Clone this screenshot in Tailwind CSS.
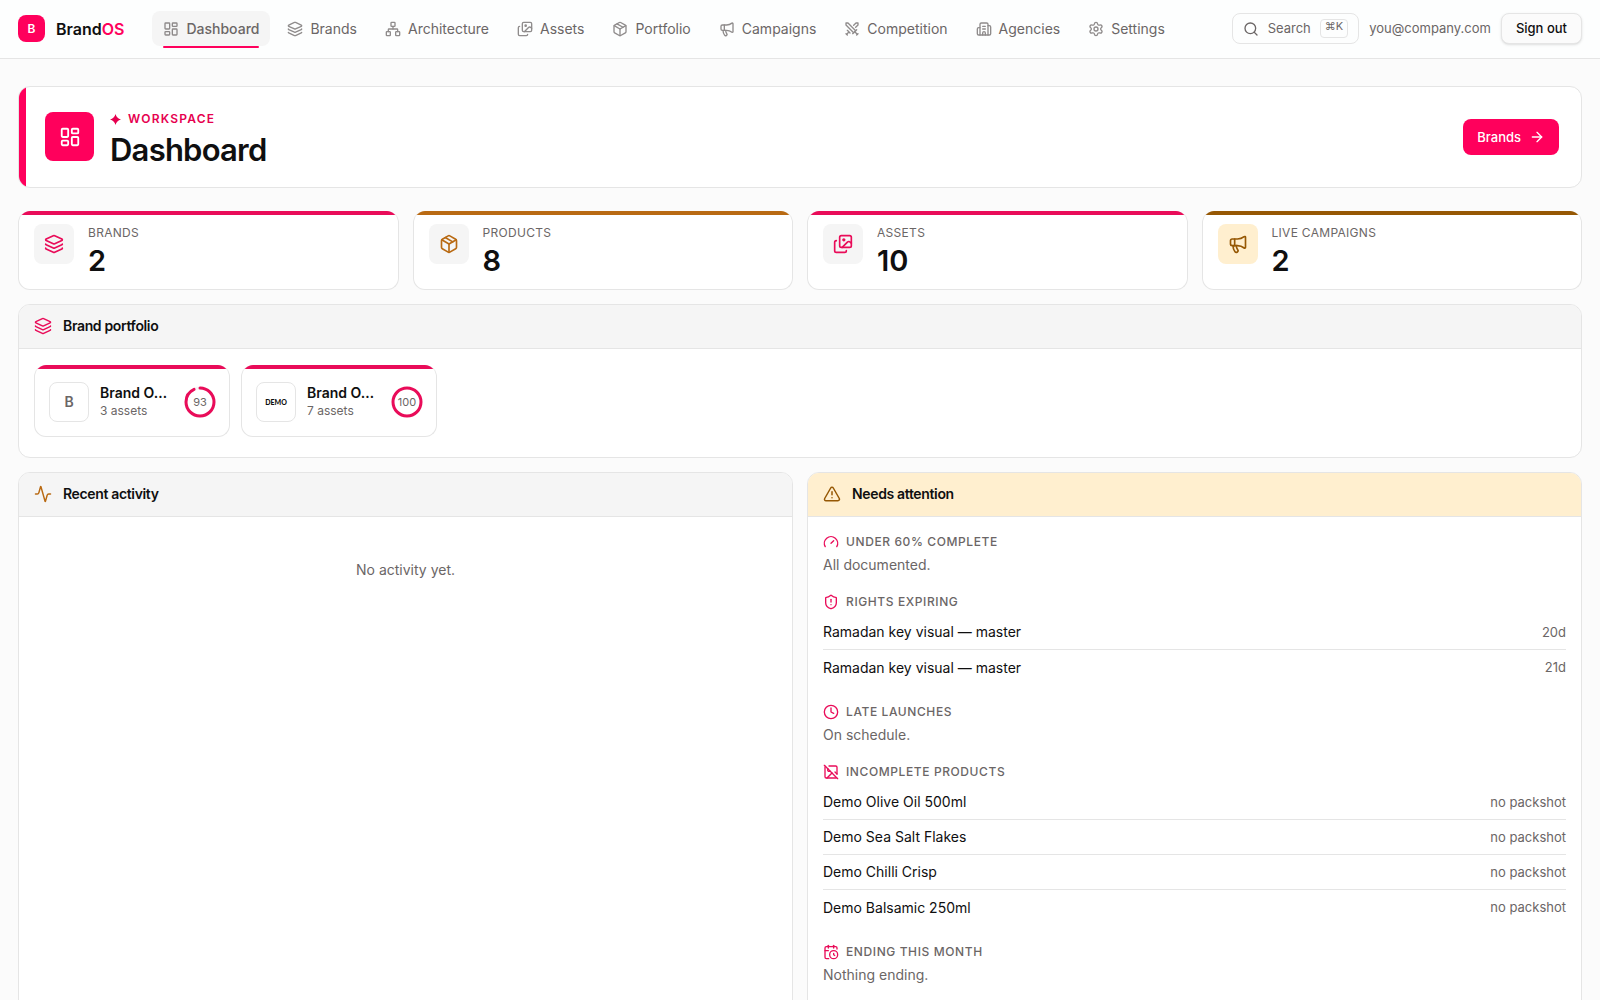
<!DOCTYPE html>
<html lang="en" class="h-full bg-[#fbfbfb]">
  <head>
    <meta charset="UTF-8">
    <meta name="viewport" content="width=device-width, initial-scale=1.0">
    <title>Dashboard · BrandOS</title>
    <script src="https://cdn.jsdelivr.net/npm/@tailwindcss/browser@4"></script>
  </head>
  <body class="min-h-full font-[Inter,sans-serif] text-sm text-[#0f0f10] [stroke-linecap:round] [stroke-linejoin:round]">
    <!-- Icon sprite -->
    <svg class="hidden" aria-hidden="true">
      <symbol id="i-dashboard" viewBox="0 0 24 24"><rect width="7" height="9" x="3" y="3" rx="1" /><rect width="7" height="5" x="14" y="3" rx="1" /><rect width="7" height="9" x="14" y="12" rx="1" /><rect width="7" height="5" x="3" y="16" rx="1" /></symbol>
      <symbol id="i-layers" viewBox="0 0 24 24"><path d="M12.83 2.18a2 2 0 0 0-1.66 0L2.6 6.08a1 1 0 0 0 0 1.83l8.58 3.91a2 2 0 0 0 1.66 0l8.58-3.9a1 1 0 0 0 0-1.83z" /><path d="M2 12a1 1 0 0 0 .58.91l8.6 3.91a2 2 0 0 0 1.65 0l8.58-3.9A1 1 0 0 0 22 12" /><path d="M2 17a1 1 0 0 0 .58.91l8.6 3.91a2 2 0 0 0 1.65 0l8.58-3.9A1 1 0 0 0 22 17" /></symbol>
      <symbol id="i-network" viewBox="0 0 24 24"><rect x="16" y="16" width="6" height="6" rx="1" /><rect x="2" y="16" width="6" height="6" rx="1" /><rect x="9" y="2" width="6" height="6" rx="1" /><path d="M5 16v-3a1 1 0 0 1 1-1h12a1 1 0 0 1 1 1v3" /><path d="M12 12V8" /></symbol>
      <symbol id="i-images" viewBox="0 0 24 24"><path d="m22 11-1.296-1.296a2.4 2.4 0 0 0-3.408 0L11 16" /><path d="M4 8a2 2 0 0 0-2 2v10a2 2 0 0 0 2 2h10a2 2 0 0 0 2-2" /><circle cx="13" cy="7" r="1" fill="currentColor" /><rect x="8" y="2" width="14" height="14" rx="2" /></symbol>
      <symbol id="i-package" viewBox="0 0 24 24"><path d="M11 21.73a2 2 0 0 0 2 0l7-4A2 2 0 0 0 21 16V8a2 2 0 0 0-1-1.73l-7-4a2 2 0 0 0-2 0l-7 4A2 2 0 0 0 3 8v8a2 2 0 0 0 1 1.73z" /><path d="M12 22V12" /><path d="M3.29 7 12 12l8.71-5" /><path d="m7.5 4.27 9 5.15" /></symbol>
      <symbol id="i-megaphone" viewBox="0 0 24 24"><path d="M11 6a13 13 0 0 0 8.4-2.8A1 1 0 0 1 21 4v12a1 1 0 0 1-1.6.8A13 13 0 0 0 11 14H5a2 2 0 0 1-2-2V8a2 2 0 0 1 2-2z" /><path d="M6 14a12 12 0 0 0 2.4 7.2 2 2 0 0 0 3.2-2.4A8 8 0 0 1 10 14" /><path d="M8 6v8" /></symbol>
      <symbol id="i-swords" viewBox="0 0 24 24"><path d="M14.5 17.5 3 6V3h3l11.5 11.5" /><path d="m13 19 6-6" /><path d="m16 16 4 4" /><path d="m19 21 2-2" /><path d="M14.5 6.5 18 3h3v3l-3.5 3.5" /><path d="m5 14 4 4" /><path d="m7 17-3 3" /><path d="m3 19 2 2" /></symbol>
      <symbol id="i-building" viewBox="0 0 24 24"><path d="M10 12h4" /><path d="M10 8h4" /><path d="M14 21v-3a2 2 0 0 0-4 0v3" /><path d="M6 10H4a2 2 0 0 0-2 2v7a2 2 0 0 0 2 2h16a2 2 0 0 0 2-2V9a2 2 0 0 0-2-2h-2" /><path d="M6 21V5a2 2 0 0 1 2-2h8a2 2 0 0 1 2 2v16" /></symbol>
      <symbol id="i-settings" viewBox="0 0 24 24"><path d="M9.671 4.136a2.34 2.34 0 0 1 4.659 0 2.34 2.34 0 0 0 3.319 1.915 2.34 2.34 0 0 1 2.33 4.033 2.34 2.34 0 0 0 0 3.831 2.34 2.34 0 0 1-2.33 4.033 2.34 2.34 0 0 0-3.319 1.915 2.34 2.34 0 0 1-4.659 0 2.34 2.34 0 0 0-3.32-1.915 2.34 2.34 0 0 1-2.33-4.033 2.34 2.34 0 0 0 0-3.831A2.34 2.34 0 0 1 6.35 6.051a2.34 2.34 0 0 0 3.319-1.915" /><circle cx="12" cy="12" r="3" /></symbol>
      <symbol id="i-search" viewBox="0 0 24 24"><path d="m21 21-4.34-4.34" /><circle cx="11" cy="11" r="8" /></symbol>
      <symbol id="i-arrow" viewBox="0 0 24 24"><path d="M5 12h14" /><path d="m12 5 7 7-7 7" /></symbol>
      <symbol id="i-activity" viewBox="0 0 24 24"><path d="M22 12h-2.48a2 2 0 0 0-1.93 1.46l-2.35 8.36a.25.25 0 0 1-.48 0L9.24 2.18a.25.25 0 0 0-.48 0l-2.35 8.36A2 2 0 0 1 4.49 12H2" /></symbol>
      <symbol id="i-alert" viewBox="0 0 24 24"><path d="m21.73 18-8-14a2 2 0 0 0-3.48 0l-8 14A2 2 0 0 0 4 21h16a2 2 0 0 0 1.73-3" /><path d="M12 9v4" /><path d="M12 17h.01" /></symbol>
      <symbol id="i-gauge" viewBox="0 0 24 24"><path d="m12 14 4-4" /><path d="M3.34 19a10 10 0 1 1 17.32 0" /></symbol>
      <symbol id="i-shield" viewBox="0 0 24 24"><path d="M20 13c0 5-3.5 7.5-7.66 8.95a1 1 0 0 1-.67-.01C7.5 20.5 4 18 4 13V6a1 1 0 0 1 1-1c2 0 4.5-1.2 6.24-2.72a1.17 1.17 0 0 1 1.52 0C14.51 3.81 17 5 19 5a1 1 0 0 1 1 1z" /><path d="M12 8v4" /><path d="M12 16h.01" /></symbol>
      <symbol id="i-clock" viewBox="0 0 24 24"><circle cx="12" cy="12" r="10" /><path d="M12 6v6l4 2" /></symbol>
      <symbol id="i-image-off" viewBox="0 0 24 24"><path d="m2 2 20 20" /><path d="M10.41 10.41a2 2 0 1 1-2.83-2.83" /><path d="M13.5 13.5 6 21" /><path d="m18 12 3 3" /><path d="M3.59 3.59A1.99 1.99 0 0 0 3 5v14a2 2 0 0 0 2 2h14c.55 0 1.052-.22 1.41-.59" /><path d="M21 15V5a2 2 0 0 0-2-2H9" /></symbol>
      <symbol id="i-calendar" viewBox="0 0 24 24"><path d="M16 14v2.2l1.6 1" /><path d="M16 2v4" /><path d="M21 7.5V6a2 2 0 0 0-2-2H5a2 2 0 0 0-2 2v14a2 2 0 0 0 2 2h3.5" /><path d="M3 10h5" /><path d="M8 2v4" /><circle cx="16" cy="16" r="6" /></symbol>
    </svg>

    <!-- Top bar -->
    <header class="flex h-[59px] items-center border-b border-[#e5e5e5] bg-[#fdfefe] px-[18px] pb-px">
      <a href="#" class="flex items-center gap-[11px]">
        <span class="flex size-[27px] items-center justify-center rounded-lg bg-[#ff005c] text-xs font-semibold text-white">B</span>
        <span class="text-base font-semibold">Brand<span class="text-[#ff005c]">OS</span></span>
      </a>
      <nav class="ml-7 flex items-center gap-1.5 text-[#6b6666]">
        <a href="#" aria-current="page" class="relative flex h-[35px] items-center gap-[7px] rounded-lg bg-[#f5f5f5] px-[11px] font-medium">
          <svg class="size-4 fill-none stroke-current stroke-2 opacity-75" aria-hidden="true"><use href="#i-dashboard" /></svg>
          Dashboard
          <span class="absolute inset-x-[11px] -bottom-0.5 h-0.5 rounded-full bg-[#ff005c]"></span>
        </a>
        <a href="#" class="flex h-[35px] items-center gap-[7px] rounded-lg px-[11px]">
          <svg class="size-4 fill-none stroke-current stroke-2 opacity-75" aria-hidden="true"><use href="#i-layers" /></svg>
          Brands
        </a>
        <a href="#" class="flex h-[35px] items-center gap-[7px] rounded-lg px-[11px]">
          <svg class="size-4 fill-none stroke-current stroke-2 opacity-75" aria-hidden="true"><use href="#i-network" /></svg>
          Architecture
        </a>
        <a href="#" class="flex h-[35px] items-center gap-[7px] rounded-lg px-[11px]">
          <svg class="size-4 fill-none stroke-current stroke-2 opacity-75" aria-hidden="true"><use href="#i-images" /></svg>
          Assets
        </a>
        <a href="#" class="flex h-[35px] items-center gap-[7px] rounded-lg px-[11px]">
          <svg class="size-4 fill-none stroke-current stroke-2 opacity-75" aria-hidden="true"><use href="#i-package" /></svg>
          Portfolio
        </a>
        <a href="#" class="flex h-[35px] items-center gap-[7px] rounded-lg px-[11px]">
          <svg class="size-4 fill-none stroke-current stroke-2 opacity-75" aria-hidden="true"><use href="#i-megaphone" /></svg>
          Campaigns
        </a>
        <a href="#" class="flex h-[35px] items-center gap-[7px] rounded-lg px-[11px]">
          <svg class="size-4 fill-none stroke-current stroke-2 opacity-75" aria-hidden="true"><use href="#i-swords" /></svg>
          Competition
        </a>
        <a href="#" class="flex h-[35px] items-center gap-[7px] rounded-lg px-[11px]">
          <svg class="size-4 fill-none stroke-current stroke-2 opacity-75" aria-hidden="true"><use href="#i-building" /></svg>
          Agencies
        </a>
        <a href="#" class="flex h-[35px] items-center gap-[7px] rounded-lg px-[11px]">
          <svg class="size-4 fill-none stroke-current stroke-2 opacity-75" aria-hidden="true"><use href="#i-settings" /></svg>
          Settings
        </a>
      </nav>
      <div class="ml-auto flex items-center gap-2.5 text-[13px] text-[#6b6666]">
        <button type="button" class="flex h-[31px] items-center gap-[9px] rounded-lg border border-[#e5e5e5] px-2.5">
          <svg class="size-4 fill-none stroke-current stroke-2" aria-hidden="true"><use href="#i-search" /></svg>
          Search
          <kbd class="flex h-[19px] items-center rounded border border-[#e5e5e5] px-1 pb-1 font-[Inter,sans-serif] text-[11px]">⌘K</kbd>
        </button>
        <span>you@company.com</span>
        <button type="button" class="h-[31px] rounded-lg border border-[#e5e5e5] bg-[#fbfbfb] px-3.5 font-medium text-[#0f0f10] shadow-sm">Sign out</button>
      </div>
    </header>

    <main class="flex flex-col gap-3.5 px-[18px] pt-[27px] pb-7">
      <!-- Heading -->
      <section class="mb-[9px] flex items-center overflow-hidden rounded-xl border border-[#e5e5e5] bg-white pr-[22px]">
        <div class="w-[7px] self-stretch bg-[#ff005c]"></div>
        <div class="flex flex-1 items-start gap-4 pt-[25px] pb-[17px] pl-[19px]">
          <div class="flex size-[49px] items-center justify-center rounded-lg bg-[#ff005c] text-white">
            <svg class="size-[22px] fill-none stroke-current stroke-2" aria-hidden="true"><use href="#i-dashboard" /></svg>
          </div>
          <div>
            <p class="flex items-center gap-[7px] text-xs leading-[14px] font-semibold tracking-widest text-[#e6004f]">
              <svg class="size-[11px] fill-current" viewBox="0 0 10 10" aria-hidden="true"><path d="M5 0Q6 4 10 5 6 6 5 10 4 6 0 5 4 4 5 0z" /></svg>
              WORKSPACE
            </p>
            <h1 class="mt-1 text-[31px] leading-10 font-semibold tracking-tight">Dashboard</h1>
          </div>
        </div>
        <a href="#" class="flex h-9 items-center gap-2 rounded-lg bg-[#ff005c] px-3.5 text-[13px] font-medium text-white">
          Brands
          <svg class="size-4 fill-none stroke-current stroke-2" aria-hidden="true"><use href="#i-arrow" /></svg>
        </a>
      </section>

      <!-- Stats -->
      <section class="grid grid-cols-4 gap-3.5">
        <div class="overflow-hidden rounded-xl border border-t-0 border-[#e5e5e5] bg-white">
          <div class="h-1 bg-[#e90c59]"></div>
          <div class="flex gap-3.5 px-[15px] py-[9px]">
            <div class="flex size-10 items-center justify-center rounded-lg bg-[#f5f5f5] text-[#e90c59]">
              <svg class="size-5 fill-none stroke-current stroke-2" aria-hidden="true"><use href="#i-layers" /></svg>
            </div>
            <div>
              <p class="text-xs leading-[18px] tracking-wide text-[#6b6666]">BRANDS</p>
              <p class="text-[29px] leading-[38px] font-semibold">2</p>
            </div>
          </div>
        </div>
        <div class="overflow-hidden rounded-xl border border-t-0 border-[#e5e5e5] bg-white">
          <div class="h-1 bg-[#b96a13]"></div>
          <div class="flex gap-3.5 px-[15px] py-[9px]">
            <div class="flex size-10 items-center justify-center rounded-lg bg-[#f5f5f5] text-[#b96a13]">
              <svg class="size-5 fill-none stroke-current stroke-2" aria-hidden="true"><use href="#i-package" /></svg>
            </div>
            <div>
              <p class="text-xs leading-[18px] tracking-wide text-[#6b6666]">PRODUCTS</p>
              <p class="text-[29px] leading-[38px] font-semibold">8</p>
            </div>
          </div>
        </div>
        <div class="overflow-hidden rounded-xl border border-t-0 border-[#e5e5e5] bg-white">
          <div class="h-1 bg-[#e90c59]"></div>
          <div class="flex gap-3.5 px-[15px] py-[9px]">
            <div class="flex size-10 items-center justify-center rounded-lg bg-[#f5f5f5] text-[#e90c59]">
              <svg class="size-5 fill-none stroke-current stroke-2" aria-hidden="true"><use href="#i-images" /></svg>
            </div>
            <div>
              <p class="text-xs leading-[18px] tracking-wide text-[#6b6666]">ASSETS</p>
              <p class="text-[29px] leading-[38px] font-semibold">10</p>
            </div>
          </div>
        </div>
        <div class="overflow-hidden rounded-xl border border-t-0 border-[#e5e5e5] bg-white">
          <div class="h-1 bg-[#965804]"></div>
          <div class="flex gap-3.5 px-[15px] py-[9px]">
            <div class="flex size-10 items-center justify-center rounded-lg bg-[#ffefcf] text-[#965804]">
              <svg class="size-5 fill-none stroke-current stroke-2" aria-hidden="true"><use href="#i-megaphone" /></svg>
            </div>
            <div>
              <p class="text-xs leading-[18px] tracking-wide text-[#6b6666]">LIVE CAMPAIGNS</p>
              <p class="text-[29px] leading-[38px] font-semibold">2</p>
            </div>
          </div>
        </div>
      </section>

      <!-- Brand portfolio -->
      <section class="overflow-hidden rounded-xl border border-[#e5e5e5] bg-white">
        <div class="flex h-11 items-center gap-[11px] border-b border-[#e5e5e5] bg-[#f5f5f5] px-[15px] pb-0.5">
          <svg class="size-[18px] fill-none stroke-[#e90c59] stroke-2" aria-hidden="true"><use href="#i-layers" /></svg>
          <h2 class="font-semibold tracking-tight">Brand portfolio</h2>
        </div>
        <div class="flex gap-[11px] px-[15px] pt-4 pb-5">
          <a href="#" class="w-[196px] overflow-hidden rounded-xl border border-t-0 border-[#e5e5e5]">
            <div class="h-1 bg-[#e90c59]"></div>
            <div class="flex items-center pt-[13px] pr-[13px] pb-3.5 pl-3.5">
              <div class="flex size-10 items-center justify-center rounded-lg border border-[#e5e5e5] font-semibold text-[#6b6666]">B</div>
              <div class="ml-[11px] flex-1">
                <p class="leading-[18px] font-semibold">Brand O…</p>
                <p class="text-xs leading-[18px] text-[#6b6666]">3 assets</p>
              </div>
              <svg class="size-8 fill-none" viewBox="0 0 32 32" aria-hidden="true">
                <circle cx="16" cy="16" r="14" stroke="#f5f5f5" stroke-width="3" />
                <circle cx="16" cy="16" r="14" stroke="#e90c59" stroke-width="3" pathLength="100" stroke-dasharray="93 100" transform="rotate(-90 16 16)" />
                <text x="16" y="20" text-anchor="middle" class="fill-[#6b6666] text-[11px]">93</text>
              </svg>
            </div>
          </a>
          <a href="#" class="w-[196px] overflow-hidden rounded-xl border border-t-0 border-[#e5e5e5]">
            <div class="h-1 bg-[#e90c59]"></div>
            <div class="flex items-center pt-[13px] pr-[13px] pb-3.5 pl-3.5">
              <div class="flex size-10 items-center justify-center rounded-lg border border-[#e5e5e5] font-[Lato,sans-serif] text-[7px] font-black">DEMO</div>
              <div class="ml-[11px] flex-1">
                <p class="leading-[18px] font-semibold">Brand O…</p>
                <p class="text-xs leading-[18px] text-[#6b6666]">7 assets</p>
              </div>
              <svg class="size-8 fill-none" viewBox="0 0 32 32" aria-hidden="true">
                <circle cx="16" cy="16" r="14" stroke="#e90c59" stroke-width="3" />
                <text x="16" y="20" text-anchor="middle" class="fill-[#6b6666] text-[11px]">100</text>
              </svg>
            </div>
          </a>
        </div>
      </section>

      <div class="grid grid-cols-2 gap-3.5">
        <!-- Recent activity -->
        <section class="overflow-hidden rounded-xl border border-[#e5e5e5] bg-white">
          <div class="flex h-11 items-center gap-[11px] border-b border-[#e5e5e5] bg-[#f5f5f5] px-[15px] pb-0.5">
            <svg class="size-[18px] fill-none stroke-[#b96a13] stroke-2" aria-hidden="true"><use href="#i-activity" /></svg>
            <h2 class="font-semibold tracking-tight">Recent activity</h2>
          </div>
          <p class="pt-[43px] text-center leading-5 text-[#6b6666]">No activity yet.</p>
        </section>

        <!-- Needs attention -->
        <section class="overflow-hidden rounded-xl border border-[#e5e5e5] bg-white">
          <div class="flex h-11 items-center gap-[11px] border-b border-[#e5e5e5] bg-[#ffefcf] px-[15px] pb-0.5">
            <svg class="size-[18px] fill-none stroke-[#965804] stroke-2" aria-hidden="true"><use href="#i-alert" /></svg>
            <h2 class="font-semibold tracking-tight">Needs attention</h2>
          </div>
          <div class="flex flex-col gap-[18px] px-[15px] pt-4 pb-8">
            <div class="flex flex-col gap-1">
              <h3 class="flex items-center gap-[7px] text-xs leading-[18px] font-medium tracking-wider text-[#6b6666]">
                <svg class="size-4 fill-none stroke-[#e90c59] stroke-2" aria-hidden="true"><use href="#i-gauge" /></svg>
                UNDER 60% COMPLETE
              </h3>
              <p class="leading-5 text-[#6b6666]">All documented.</p>
            </div>
            <div class="flex flex-col gap-1">
              <h3 class="flex items-center gap-[7px] text-xs leading-[18px] font-medium tracking-wider text-[#6b6666]">
                <svg class="size-4 fill-none stroke-[#e90c59] stroke-2" aria-hidden="true"><use href="#i-shield" /></svg>
                RIGHTS EXPIRING
              </h3>
              <ul class="divide-y divide-[#e5e5e5]">
                <li class="flex h-[35px] items-center justify-between">Ramadan key visual — master <span class="text-[13px] text-[#6b6666]">20d</span></li>
                <li class="flex h-[35px] items-center justify-between">Ramadan key visual — master <span class="text-[13px] text-[#6b6666]">21d</span></li>
              </ul>
            </div>
            <div class="flex flex-col gap-1">
              <h3 class="flex items-center gap-[7px] text-xs leading-[18px] font-medium tracking-wider text-[#6b6666]">
                <svg class="size-4 fill-none stroke-[#e90c59] stroke-2" aria-hidden="true"><use href="#i-clock" /></svg>
                LATE LAUNCHES
              </h3>
              <p class="leading-5 text-[#6b6666]">On schedule.</p>
            </div>
            <div class="flex flex-col gap-1">
              <h3 class="flex items-center gap-[7px] text-xs leading-[18px] font-medium tracking-wider text-[#6b6666]">
                <svg class="size-4 fill-none stroke-[#e90c59] stroke-2" aria-hidden="true"><use href="#i-image-off" /></svg>
                INCOMPLETE PRODUCTS
              </h3>
              <ul class="divide-y divide-[#e5e5e5]">
                <li class="flex h-[35px] items-center justify-between">Demo Olive Oil 500ml <span class="text-[13px] text-[#6b6666]">no packshot</span></li>
                <li class="flex h-[35px] items-center justify-between">Demo Sea Salt Flakes <span class="text-[13px] text-[#6b6666]">no packshot</span></li>
                <li class="flex h-[35px] items-center justify-between">Demo Chilli Crisp <span class="text-[13px] text-[#6b6666]">no packshot</span></li>
                <li class="flex h-[35px] items-center justify-between">Demo Balsamic 250ml <span class="text-[13px] text-[#6b6666]">no packshot</span></li>
              </ul>
            </div>
            <div class="flex flex-col gap-1">
              <h3 class="flex items-center gap-[7px] text-xs leading-[18px] font-medium tracking-wider text-[#6b6666]">
                <svg class="size-4 fill-none stroke-[#e90c59] stroke-2" aria-hidden="true"><use href="#i-calendar" /></svg>
                ENDING THIS MONTH
              </h3>
              <p class="leading-5 text-[#6b6666]">Nothing ending.</p>
            </div>
          </div>
        </section>
      </div>
    </main>
  </body>
</html>
